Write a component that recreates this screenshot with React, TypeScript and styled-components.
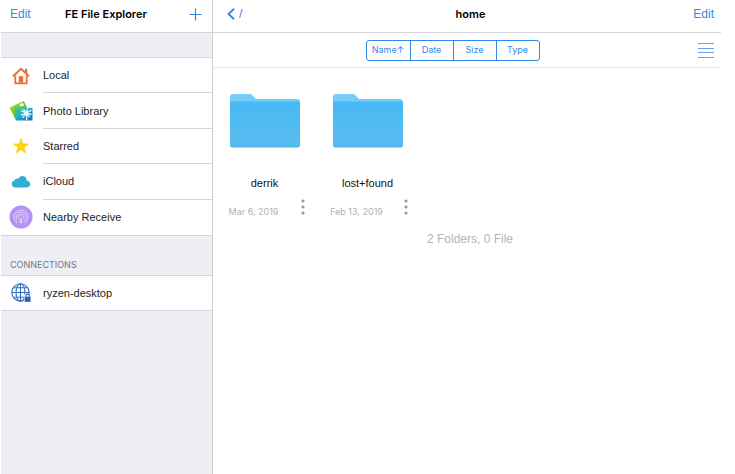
import React from "react";
import styled, { createGlobalStyle } from "styled-components";

const GlobalStyle = createGlobalStyle`
  * { box-sizing: border-box; }
  body { margin: 0; background: #fff; }
  button { font: inherit; background: none; border: 0; padding: 0; margin: 0; cursor: pointer; }
  h1, h2, ul, p { margin: 0; padding: 0; font: inherit; }
  ul { list-style: none; }
  svg { display: block; }
`;

const blue = "#338ae6";
const line = "#d6d6da";
const smallFont = `Inter, "Liberation Sans", sans-serif`;

const Page = styled.div`
  display: grid;
  grid-template-columns: 212px 1fr;
  min-height: 100vh;
  padding: 0 14px 0 1px;
  font-family: "Liberation Sans", Inter, sans-serif;
  font-size: 11px;
  line-height: 16px;
  color: #1c1c1e;
`;

const Sidebar = styled.aside`
  background: #eeeef4;
  border-right: 1px solid #cfcfd4;
`;

const Main = styled.main`
  background: #fff;
`;

const Header = styled.header<{ $left: number; $right: number }>`
  display: grid;
  grid-template-columns: 1fr auto 1fr;
  align-items: center;
  height: 33px;
  padding: 0 ${(p) => p.$right}px 4px ${(p) => p.$left}px;
  background: #fff;
  border-bottom: 1px solid ${line};
`;

const Title = styled.h1`
  && {
    font-family: ${smallFont};
    font-size: 11px;
    font-weight: 600;
    color: #000;
  }
`;

const BarButton = styled.button<{ $end?: boolean }>`
  && {
    display: flex;
    align-items: center;
    gap: 4px;
    justify-self: ${(p) => (p.$end ? "end" : "start")};
    color: ${blue};
    font-size: 12px;
  }
`;

const Places = styled.ul<{ $rows: number; $height: number }>`
  display: grid;
  grid-template-rows: repeat(${(p) => p.$rows}, 1fr);
  height: ${(p) => p.$height}px;
  background: #fff;
  border-top: 1px solid ${line};
  border-bottom: 1px solid ${line};
`;

const PlacesGroup = styled.nav`
  padding-top: 24px;
`;

const Place = styled.li`
  display: flex;
`;

const PlaceButton = styled.button`
  && {
    display: grid;
    grid-template-columns: 42px 1fr;
    align-items: stretch;
    width: 100%;
    color: #1c1c1e;
    text-align: left;
  }
`;

const PlaceIcon = styled.span`
  display: flex;
  align-items: center;
  justify-content: center;
  padding-right: 2px;
`;

const PlaceLabel = styled.span`
  display: flex;
  align-items: center;
  border-bottom: 1px solid ${line};
  ${Place}:last-child & {
    border-bottom-color: transparent;
  }
`;

const SectionTitle = styled.h2`
  && {
    padding: 21px 9px 2px;
    font-family: ${smallFont};
    font-size: 9px;
    color: #77777d;
  }
`;

const Toolbar = styled.div`
  display: flex;
  align-items: center;
  height: 35px;
  padding: 0 7px 0 1px;
  border-bottom: 1px solid #e9e9ec;
`;

const SortArea = styled.div`
  flex: 1;
  display: flex;
  justify-content: center;
`;

const Segments = styled.div`
  display: grid;
  grid-template-columns: repeat(4, 43px);
  height: 21px;
  border: 1px solid ${blue};
  border-radius: 3px;
`;

const Segment = styled.button`
  && {
    color: ${blue};
    font-family: ${smallFont};
    font-size: 9px;
  }
  & + & {
    border-left: 1px solid ${blue};
  }
`;

const ListButton = styled.button`
  && {
    padding-left: 7px;
    color: #62a6e8;
  }
`;

const Files = styled.ul`
  display: grid;
  grid-template-columns: repeat(auto-fill, 103px);
  padding: 26px 0 0;
`;

const File = styled.li`
  display: flex;
  flex-direction: column;
  align-items: center;
`;

const FileName = styled.span`
  margin-top: 27px;
  color: #111;
`;

const FileMeta = styled.div`
  display: grid;
  grid-template-columns: 1fr 22px;
  align-items: start;
  width: 100%;
  padding-top: 7px;
`;

const FileDate = styled.span`
  padding-top: 6px;
  font-family: ${smallFont};
  font-size: 9px;
  color: #b0b0b4;
  text-align: center;
`;

const MoreButton = styled.button`
  && {
    display: flex;
    padding: 1px 0 3px 7px;
    color: #98989c;
  }
`;

const Summary = styled.p`
  && {
    padding: 10px 2px 0 8px;
    text-align: center;
    font-size: 12px;
    line-height: 18px;
    color: #b4b4b8;
  }
`;

const HomeIcon = () => (
  <svg width="18" height="18" viewBox="0 0 18 18" fill="none" stroke="#ed6c2e">
    <path d="M1 9.2 9 1.8l8 7.4" strokeWidth="1.9" />
    <path d="M3.3 8.5v7.8h11.4V8.5" strokeWidth="1.7" />
    <path d="M13 1.8h2.2v5L13 4.8z" fill="#ed6c2e" stroke="none" />
    <path d="M6.8 9.2h4.4v6.5H6.8z" fill="#ed6c2e" stroke="none" />
  </svg>
);

const PhotosIcon = () => (
  <svg width="24" height="22" viewBox="0 0 24 22">
    <defs>
      <linearGradient id="leaf" x2="1" y2="1">
        <stop stopColor="#b7df25" />
        <stop offset="1" stopColor="#29a957" />
      </linearGradient>
      <linearGradient id="sea" x2="1" y2="1">
        <stop stopColor="#55c878" />
        <stop offset=".45" stopColor="#20aeca" />
        <stop offset="1" stopColor="#176dbd" />
      </linearGradient>
    </defs>
    <path d="M.5 7.500 15 1l3.500 8L6.500 19.500z" fill="url(#leaf)" />
    <path d="M10.500 4.200 13.800 2.800l1.400 3-3.700.8z" fill="#f4ffe2" />
    <path d="M5.500 7.500 23.500 8v12.500H6.800z" fill="url(#sea)" />
    <path
      d="m17.500 13-5-2.200m5 2.200-5 1.800m5-1.800-2.800-3.500m2.800 3.500 1-4m-1 4 4.400-2.600m-4.400 2.600 4.700 1.400M17.500 13l2.700 3.700M17.500 13l-3.400 4.200m3.400-4.200.2 6.500"
      stroke="#effcff"
      strokeWidth="1.3"
      strokeLinecap="round"
    />
  </svg>
);

const StarIcon = () => (
  <svg width="18" height="18" viewBox="0 0 18 18">
    <path d="m9 .8 2.1 5.800 6.200.2-4.900 3.800 1.800 6L9 13.100l-5.200 3.500 1.800-6L.7 6.800l6.200-.2z" fill="#fbd30c" />
  </svg>
);

const CloudIcon = () => (
  <svg width="20" height="14" viewBox="0 0 20 14">
    <path d="M4.500 12.500A3.800 3.800 0 0 1 .8 9c0-2 1.200-3.200 2.800-3.400.1-1.900 2.300-2.700 3.600-1.700C8.100 2 9.400 1 11.300 1c2.800 0 4.400 2 4.400 4.600 2 .1 3.500 1.600 3.500 3.500 0 2.200-1.400 3.400-3.400 3.400z" fill="#30afd3" />
  </svg>
);

const NearbyIcon = () => (
  <svg width="24" height="24" viewBox="0 0 24 24" fill="none">
    <circle cx="12" cy="12" r="11.500" fill="#b592f3" />
    <g stroke="#e6dafd" strokeWidth=".9" strokeLinecap="round">
      <path d="M7.800 17.800a7 7 0 1 1 8.400 0" />
      <path d="M9 15.800a4.800 4.800 0 1 1 6 0" />
      <path d="M10.500 14a2.600 2.600 0 1 1 3 0" />
    </g>
    <path d="M12 11.500 13.500 18h-3z" fill="#e6dafd" />
  </svg>
);

const GlobeIcon = () => (
  <svg width="20" height="20" viewBox="0 0 20 20" fill="none" stroke="#326dc5" strokeWidth="1.1">
    <circle cx="9.500" cy="9.500" r="8.700" />
    <ellipse cx="9.500" cy="9.500" rx="4.500" ry="8.700" />
    <path d="M9.500.8v17.400M.8 9.500h17.400M2.300 4.800h14.400M2.300 14.200h14.400" />
    <path d="M12.800 11.500h7v8h-7z" fill="#fff" stroke="none" />
    <path d="M13.600 13.700h6v5.100h-6z" fill="#2861bd" stroke="none" />
    <path d="M14.900 14v-1.200a1.700 1.700 0 0 1 3.400 0V14" stroke="#2861bd" />
  </svg>
);

const PlusIcon = () => (
  <svg width="13" height="13" viewBox="0 0 13 13" stroke="currentColor" strokeWidth="1.2">
    <path d="M6.500.5v12M.5 6.500h12" />
  </svg>
);

const BackIcon = () => (
  <svg width="8" height="12" viewBox="0 0 8 12" fill="none" stroke="currentColor" strokeWidth="1.900">
    <path d="M7 .8 1.600 6 7 11.200" />
  </svg>
);

const ListIcon = () => (
  <svg width="16" height="15" viewBox="0 0 16 15" stroke="currentColor">
    <path d="M0 .5h16M0 5.500h16M0 9.500h16M0 14.500h16" />
  </svg>
);

const FolderIcon = () => (
  <svg width="70" height="54" viewBox="0 0 70 54">
    <defs>
      <linearGradient id="folder" x2="0" y2="1">
        <stop stopColor="#48b9f4" />
        <stop offset=".94" stopColor="#57bdef" />
        <stop offset="1" stopColor="#4eb1e2" />
      </linearGradient>
    </defs>
    <path d="M0 10V3q0-3 3-3h17q2 0 3 2l1 1q1 2 3 2h40q3 0 3 3v5H0z" fill="#74cdf8" />
    <path d="M0 9q0-1.500 1.500-1.500h67Q70 7.500 70 9v42q0 2.500-2.500 2.500h-65Q0 53.500 0 51z" fill="url(#folder)" />
  </svg>
);

const DotsIcon = () => (
  <svg width="4" height="16" viewBox="0 0 4 16" fill="currentColor">
    <circle cx="2" cy="2" r="1.600" />
    <circle cx="2" cy="8" r="1.600" />
    <circle cx="2" cy="14" r="1.600" />
  </svg>
);

const places = [
  { label: "Local", Icon: HomeIcon },
  { label: "Photo Library", Icon: PhotosIcon },
  { label: "Starred", Icon: StarIcon },
  { label: "iCloud", Icon: CloudIcon },
  { label: "Nearby Receive", Icon: NearbyIcon },
];

const connections = [{ label: "ryzen-desktop", Icon: GlobeIcon }];

const folders = [
  { name: "derrik", date: "Mar 6, 2019" },
  { name: "lost+found", date: "Feb 13, 2019" },
];

type PlaceItem = { label: string; Icon: React.ComponentType };

const PlaceList = ({ items, height }: { items: PlaceItem[]; height: number }) => (
  <Places $rows={items.length} $height={height}>
    {items.map(({ label, Icon }) => (
      <Place key={label}>
        <PlaceButton type="button">
          <PlaceIcon aria-hidden="true">
            <Icon />
          </PlaceIcon>
          <PlaceLabel>{label}</PlaceLabel>
        </PlaceButton>
      </Place>
    ))}
  </Places>
);

export default function App() {
  return (
    <>
      <GlobalStyle />
      <Page>
        <Sidebar>
          <Header $left={9} $right={10}>
            <BarButton type="button">Edit</BarButton>
            <Title>FE File Explorer</Title>
            <BarButton type="button" $end aria-label="Add">
              <PlusIcon />
            </BarButton>
          </Header>
          <PlacesGroup>
            <PlaceList items={places} height={179} />
            <SectionTitle>CONNECTIONS</SectionTitle>
            <PlaceList items={connections} height={36} />
          </PlacesGroup>
        </Sidebar>
        <Main>
          <Header $left={14} $right={7}>
            <BarButton type="button" aria-label="Back to /">
              <BackIcon />/
            </BarButton>
            <Title>home</Title>
            <BarButton type="button" $end>
              Edit
            </BarButton>
          </Header>
          <Toolbar>
            <SortArea>
              <Segments role="group" aria-label="Sort by">
                <Segment type="button">Name↑</Segment>
                <Segment type="button">Date</Segment>
                <Segment type="button">Size</Segment>
                <Segment type="button">Type</Segment>
              </Segments>
            </SortArea>
            <ListButton type="button" aria-label="List view">
              <ListIcon />
            </ListButton>
          </Toolbar>
          <Files>
            {folders.map((folder) => (
              <File key={folder.name}>
                <FolderIcon />
                <FileName>{folder.name}</FileName>
                <FileMeta>
                  <FileDate>{folder.date}</FileDate>
                  <MoreButton type="button" aria-label={`More options for ${folder.name}`}>
                    <DotsIcon />
                  </MoreButton>
                </FileMeta>
              </File>
            ))}
          </Files>
          <Summary>2 Folders, 0 File</Summary>
        </Main>
      </Page>
    </>
  );
}
